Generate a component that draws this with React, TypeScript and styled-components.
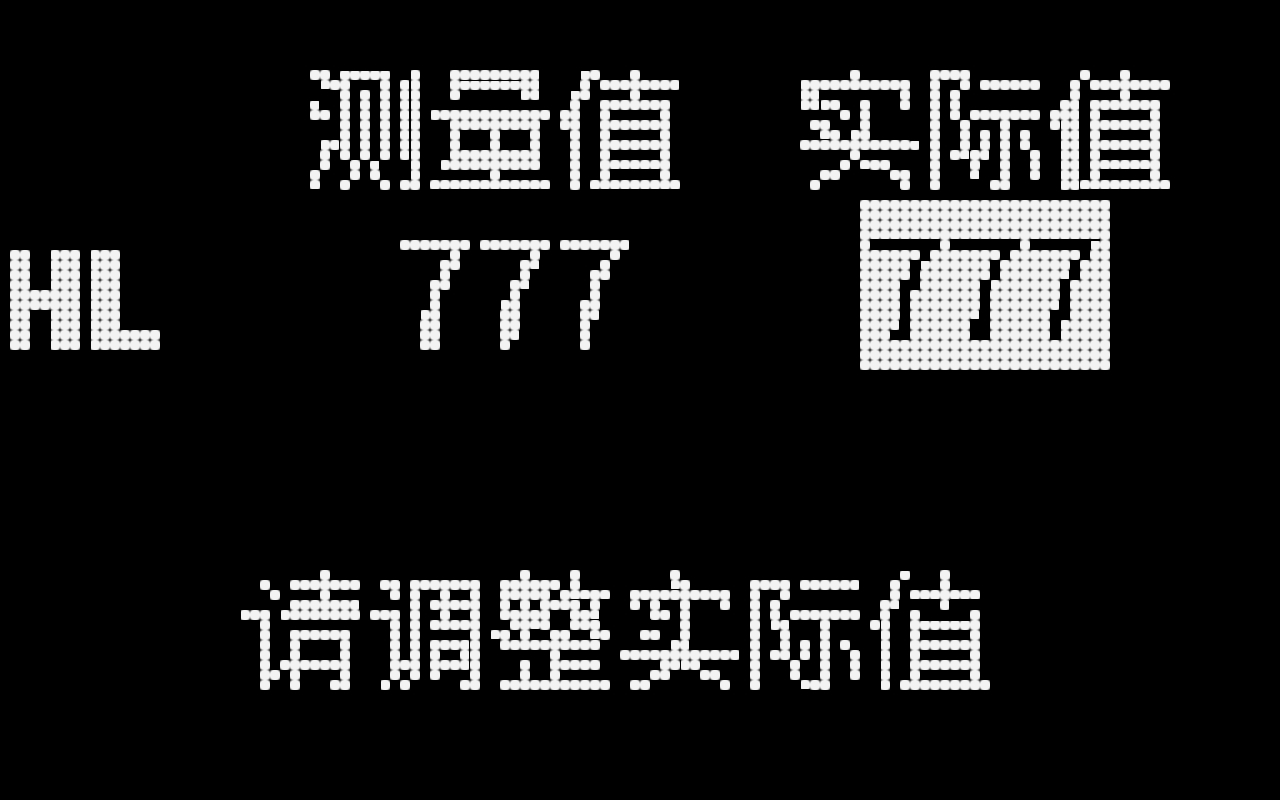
import React from "react";
import styled, { createGlobalStyle } from "styled-components";

const GlobalStyle = createGlobalStyle`
  html, body {
    margin: 0;
    padding: 0;
    background: #000;
    overflow: hidden;
  }
  #root {
    width: 1280px;
    height: 800px;
  }
`;

const PITCH = 10;

const dotMask = `radial-gradient(
    circle at ${PITCH / 2}px ${PITCH / 2}px,
    #000 0,
    #000 4.6px,
    rgba(0, 0, 0, 0.8) 5.3px,
    transparent 7px
  )`;

const Screen = styled.main`
  width: 1280px;
  height: 800px;
  background: #000;
  display: flex;
  flex-direction: column;
  filter: url(#lcd-dots);
  -webkit-mask-image: ${dotMask};
  mask-image: ${dotMask};
  -webkit-mask-size: ${PITCH}px ${PITCH}px;
  mask-size: ${PITCH}px ${PITCH}px;
  -webkit-mask-repeat: repeat;
  mask-repeat: repeat;
`;

const Row = styled.section<{ $top: number; $height: number }>`
  display: grid;
  grid-template-columns: 300px 490px 1fr;
  align-items: start;
  margin-top: ${(p) => p.$top}px;
  height: ${(p) => p.$height}px;
`;

const ColumnTitle = styled.h2<{ $indent: number }>`
  margin: 0;
  padding-left: ${(p) => p.$indent}px;
  font-family: "Noto Sans CJK SC", sans-serif;
  font-weight: 400;
  font-size: 130px;
  line-height: 1;
  letter-spacing: -4px;
  color: #fff;
  white-space: nowrap;
`;

const Label = styled.span<{ $top: number }>`
  margin-top: ${(p) => p.$top}px;
  font-family: "DejaVu Sans Mono", monospace;
  font-weight: 700;
  font-size: 142px;
  line-height: 1;
  letter-spacing: -6px;
  color: #fff;
`;

const Reading = styled.span<{ $top: number; $indent: number; $inverse?: boolean }>`
  margin-top: ${(p) => p.$top}px;
  margin-left: ${(p) => p.$indent}px;
  font-family: "Noto Sans CJK SC", sans-serif;
  font-weight: 400;
  font-size: 150px;
  line-height: 1;
  letter-spacing: -5px;
  color: ${(p) => (p.$inverse ? "#000" : "#fff")};
  white-space: nowrap;
`;

const Highlight = styled.div<{ $indent: number }>`
  margin-left: ${(p) => p.$indent}px;
  width: 250px;
  height: 166px;
  background: #fff;
  display: flex;
  align-items: flex-start;
`;

const Message = styled.p<{ $top: number; $indent: number }>`
  margin: ${(p) => p.$top}px 0 0 0;
  padding-left: ${(p) => p.$indent}px;
  font-family: "Noto Sans CJK SC", sans-serif;
  font-weight: 400;
  font-size: 128px;
  line-height: 1;
  letter-spacing: -3px;
  color: #fff;
  white-space: nowrap;
`;

const FilterDefs = styled.svg`
  display: block;
  width: 0;
  height: 0;
`;

export default function App() {
  return (
    <>
      <GlobalStyle />
      <Screen>
        <Row $top={55} $height={130}>
          <span />
          <ColumnTitle $indent={2}>测量值</ColumnTitle>
          <ColumnTitle $indent={3}>实际值</ColumnTitle>
        </Row>
        <Row $top={15} $height={166}>
          <Label $top={32}>HL</Label>
          <Reading $top={6} $indent={92}>
            777
          </Reading>
          <Highlight $indent={70}>
            <Reading $top={2} $indent={4} $inverse>
              777
            </Reading>
          </Highlight>
        </Row>
        <Message $top={196} $indent={240}>
          请调整实际值
        </Message>
      </Screen>
      <FilterDefs aria-hidden="true">
        <filter
          id="lcd-dots"
          x="0"
          y="0"
          width="1"
          height="1"
          colorInterpolationFilters="sRGB"
        >
          <feColorMatrix in="SourceGraphic" type="luminanceToAlpha" result="lum" />
          <feFlood x="4" y="4" width="2" height="2" floodColor="#000" floodOpacity="1" result="dot" />
          <feComposite in="dot" in2="dot" operator="over" x="0" y="0" width={PITCH} height={PITCH} result="cell" />
          <feTile in="cell" result="grid" />
          <feComposite in="lum" in2="grid" operator="in" result="sampled" />
          <feMorphology in="sampled" operator="dilate" radius="4" result="blocks" />
          <feComponentTransfer in="blocks" result="bits">
            <feFuncA type="discrete" tableValues="0 0 0 0 1 1 1 1 1 1" />
          </feComponentTransfer>
          <feFlood floodColor="#f3f3f3" floodOpacity="1" result="lit" />
          <feComposite in="lit" in2="bits" operator="in" />
        </filter>
      </FilterDefs>
    </>
  );
}
